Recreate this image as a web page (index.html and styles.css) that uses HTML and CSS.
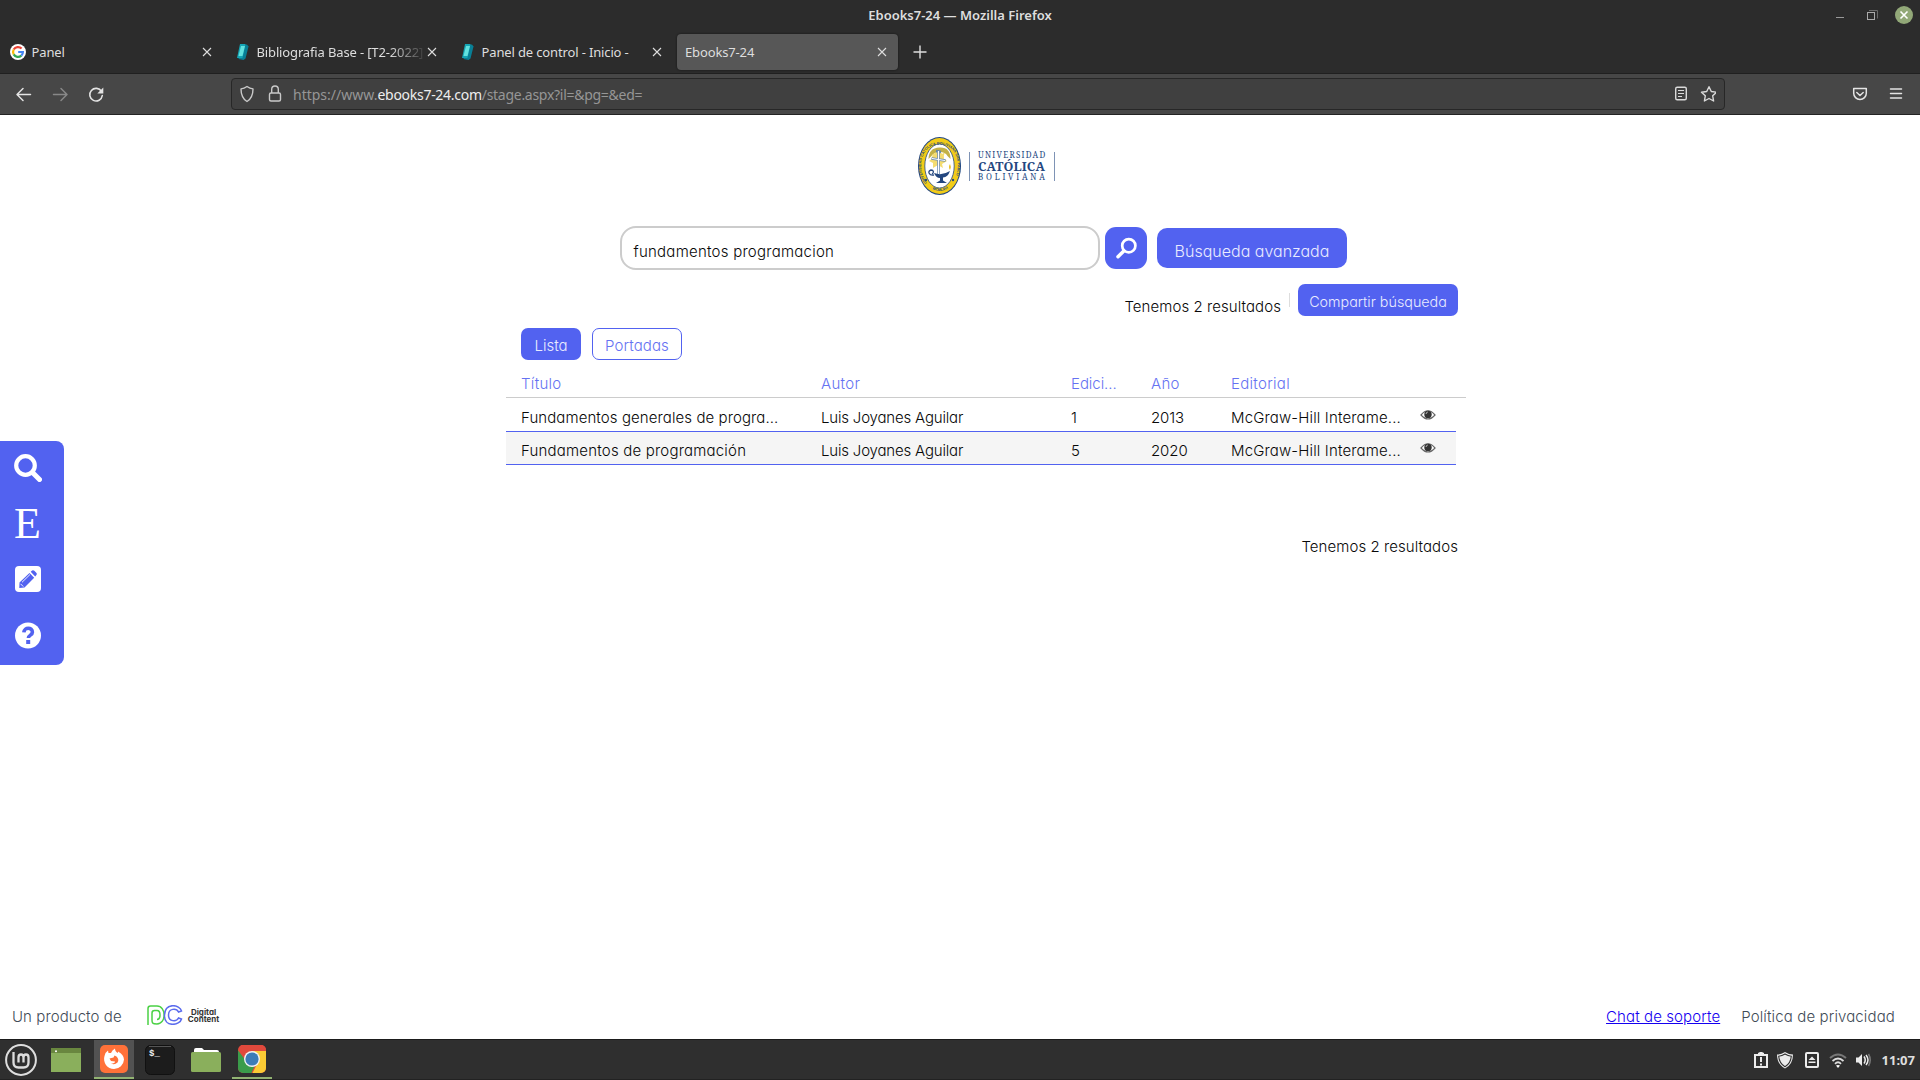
FILE: index.html
```html
<!DOCTYPE html>
<html lang="es">
<head>
<meta charset="utf-8">
<title>Ebooks7-24</title>
<link rel="stylesheet" href="styles.css">
</head>
<body>
<header class="titlebar">
  <span class="window-title">Ebooks7-24 — Mozilla Firefox</span>
  <svg class="window-controls" width="90" height="30" viewBox="0 0 90 30">
    <path d="M6 17.500h8" stroke="#999" fill="none"/>
    <path d="M39 10.500h8.500v8" stroke="#6a6a6a" fill="none"/>
    <rect x="37.500" y="12.500" width="7" height="7" stroke="#aaa" fill="none"/>
    <circle cx="74" cy="15" r="9" fill="#92a878"/>
    <path d="M70.500 11.500l7 7M77.500 11.500l-7 7" stroke="#fff" stroke-width="1.600"/>
  </svg>
</header>
<nav class="tabs">
  <div class="tab">
    <svg class="favicon" width="16" height="16" viewBox="0 0 16 16"><circle cx="8" cy="8" r="8" fill="#fff"/><g fill="none" stroke-width="2.200"><path d="M11.600 4.600A4.900 4.900 0 0 0 3.700 5.600" stroke="#ea4335"/><path d="M3.700 5.600a4.900 4.900 0 0 0 0 4.800" stroke="#fbbc05"/><path d="M3.700 10.400a4.900 4.900 0 0 0 7.600 1.200" stroke="#34a853"/><path d="M11.300 11.600A4.900 4.900 0 0 0 12.900 8H8.200" stroke="#4285f4"/></g></svg>
    <span class="tab-label">Panel</span>
    <svg class="close" width="10" height="10" viewBox="0 0 10 10"><path d="M1 1l8 8M9 1L1 9"/></svg>
  </div>
  <div class="tab">
    <svg class="favicon" width="16" height="16" viewBox="0 0 16 16"><path d="M7 1l5-.5 1.500 2-3 12-2 1.500-5-1z" fill="#087f96"/><path d="M5 0h5.500L7.500 14H2z" fill="#15a5b5"/><path d="M6 2h4L7.500 12h-4z" fill="#62e2df"/></svg>
    <span class="tab-label faded">Bibliografia Base - [T2-2022]</span>
    <svg class="close" width="10" height="10" viewBox="0 0 10 10"><path d="M1 1l8 8M9 1L1 9"/></svg>
  </div>
  <div class="tab">
    <svg class="favicon" width="16" height="16" viewBox="0 0 16 16"><path d="M7 1l5-.5 1.500 2-3 12-2 1.500-5-1z" fill="#087f96"/><path d="M5 0h5.500L7.500 14H2z" fill="#15a5b5"/><path d="M6 2h4L7.500 12h-4z" fill="#62e2df"/></svg>
    <span class="tab-label">Panel de control - Inicio -</span>
    <svg class="close" width="10" height="10" viewBox="0 0 10 10"><path d="M1 1l8 8M9 1L1 9"/></svg>
  </div>
  <div class="tab active">
    <span class="tab-label">Ebooks7-24</span>
    <svg class="close" width="10" height="10" viewBox="0 0 10 10"><path d="M1 1l8 8M9 1L1 9"/></svg>
  </div>
  <svg class="new-tab" width="14" height="14" viewBox="0 0 14 14"><path d="M7 .5v13M.5 7h13"/></svg>
</nav>
<div class="toolbar">
  <svg class="nav-buttons" width="110" height="20" viewBox="0 0 110 20">
    <g fill="none" stroke-width="1.500" stroke-linecap="round" stroke-linejoin="round">
      <path d="M30.500 10.500H17.500M23 4.500l-6 6 6 6" stroke="#e4e4e4"/>
      <path d="M53.500 10.500h13M61 4.500l6 6-6 6" stroke="#888"/>
      <path d="M101.500 7.500A6.300 6.300 0 1 0 102.300 11.500" stroke="#e4e4e4" stroke-width="1.600"/>
    </g>
    <path d="M103.300 3.500v6h-6z" fill="#e4e4e4"/>
  </svg>
  <div class="urlbar">
    <svg width="48" height="20" viewBox="0 0 48 20" fill="none" stroke="#c9c9c9" stroke-width="1.400" stroke-linejoin="round">
      <path d="M7 2.500c2 1.500 3.800 2.200 6 2.400 0 5.500-1.500 9.700-6 12.600C2.500 14.600 1 10.400 1 4.900 3.200 4.700 5 4 7 2.500z"/>
      <rect x="29.500" y="9" width="11" height="8" rx="1.500"/><path d="M31.700 9V5.300a3.300 3.300 0 0 1 6.600 0V9"/>
    </svg>
    <span class="url">https://www.<b>ebooks7-24.com</b><span class="path">/stage.aspx?il=&amp;pg=&amp;ed=</span></span>
    <svg width="46" height="20" viewBox="0 0 46 20" fill="none" stroke="#dadada" stroke-width="1.400" stroke-linejoin="round">
      <rect x="5.700" y="3.200" width="10.600" height="12.600" rx="1.500"/><path d="M8 6.500h6M8 9.500h6M8 12.500h4" stroke-width="1.200"/>
      <path d="M39 2.700l2.300 4.800 5.200.7-3.800 3.600.9 5.200-4.600-2.500-4.600 2.500.9-5.200-3.800-3.600 5.200-.7z"/>
    </svg>
  </div>
  <svg class="menu-buttons" width="64" height="20" viewBox="0 0 64 20" fill="none" stroke="#e4e4e4" stroke-width="1.500" stroke-linecap="round" stroke-linejoin="round">
    <path d="M9.700 4.500h12.600v4.700a6.300 6.300 0 0 1-12.600 0z"/><path d="M12.800 8.500L16 11.500l3.200-3"/>
    <path d="M46.500 5h11M46.500 9.500h11M46.500 14h11"/>
  </svg>
</div>
<main class="page">
  <aside class="side">
    <svg width="28" height="28" viewBox="0 0 28 28" fill="none" stroke="#fff"><circle cx="11.500" cy="11.500" r="9.300" stroke-width="4.200"/><path d="M18.500 18.500l7 7" stroke-width="5" stroke-linecap="round"/></svg>
    <span class="side-letter">E</span>
    <svg width="28" height="28" viewBox="0 0 28 28"><rect x="1" y="0" width="26" height="26" rx="4" fill="#fff"/><g transform="translate(0 -1)"><g fill="#5262f0"><path d="M5.500 17.500L15.500 8l4.700 4.700-9.700 9.800-5.200.4z"/><path d="M16.700 6.800l1.400-1.300q1.200-.8 2.200.2l2.200 2.400q.8 1-.1 2l-1.200 1.400z"/></g><path d="M8 17.300l8-7.800M6.500 18.800l2.800 2.800" stroke="#fff" stroke-width=".9"/></g></svg>
    <svg width="28" height="28" viewBox="0 0 28 28"><g transform="translate(0 -.5)"><circle cx="14" cy="14" r="13" fill="#fff"/><path d="M9.800 10.800c.3-5.400 8.700-5.200 8.600-.2 0 3.200-4 2.800-4 6" fill="none" stroke="#5262f0" stroke-width="3.600"/><rect x="12.200" y="18.500" width="4" height="4" fill="#5262f0"/></g></svg>
  </aside>
  <div class="logo">
    <svg width="43" height="58" viewBox="0 0 43 58">
      <defs><path id="ring" d="M9 46C-2 31 3 7.500 21.500 7.500S45 31 34 46"/><path id="base" d="M11 50q10.500 8 21 0"/></defs>
      <ellipse cx="21.500" cy="29" rx="21.500" ry="29" fill="#24477f"/>
      <ellipse cx="21.500" cy="29" rx="20.500" ry="28" fill="#f2cc18"/>
      <ellipse cx="21.500" cy="29" rx="14.700" ry="22" fill="#fff" stroke="#24477f" stroke-width=".8"/>
      <text class="seal-text"><textPath href="#ring" textLength="91">UNIVERSIDAD CATOLICA BOLIVIANA SAN PABLO</textPath></text>
      <text class="seal-text"><textPath href="#base" startOffset="4">MCMLXVI</textPath></text>
      <g fill="#f4dc70"><circle cx="20" cy="21" r="6"/><path d="M14 15l4 3 2-6 3 6 4-3-2 6 4 3-5 3 1 4-5-3-5 3 0-5-4-2 4-3z"/></g>
      <path d="M10.500 22q0-11 11-11.500t11 11.500l-3-3q-2-4-8-4t-8 4z" fill="#c3b146"/>
      <path d="M20.500 14v23M13.500 21.500l14 2M18 14l5 1" stroke="#6284ad" stroke-width="2.600"/><path d="M20.500 14v23M14 21.500l13 2" stroke="#fff" stroke-width="1.200"/>
      <path d="M16 36q8 3 16-2-2 6-7 6.500v3l4 2.500H18l4-2.500v-2.500q-4 0-6-5z" fill="#24477f"/>
      <path d="M16 38c-5 1-7-4-3-5 3 0 3 3 1 4" fill="none" stroke="#24477f" stroke-width="1.300"/>
      <path d="M32 33q-2-3 0-6 1.800 3 0 6z" fill="#e8bd20"/>
      <circle cx="8" cy="43" r="1.200" fill="#24477f"/><circle cx="35" cy="43" r="1.200" fill="#24477f"/>
    </svg>
    <div class="logo-name"><span class="line-top">UNIVERSIDAD</span><strong>CATÓLICA</strong><span class="line-bottom">BOLIVIANA</span></div>
  </div>
  <form class="search">
    <div class="search-field">fundamentos programacion</div>
    <div class="btn search-go"><svg width="24" height="24" viewBox="0 0 24 24" fill="none" stroke="#fff" stroke-linecap="round"><circle cx="14.800" cy="9.700" r="6.600" stroke-width="2.700"/><path d="M9.800 14.900L4 20.700" stroke-width="3.500"/></svg></div>
    <div class="btn advanced">Búsqueda avanzada</div>
  </form>
  <section class="results">
    <div class="summary"><span class="count">Tenemos 2 resultados</span><i class="divider"></i><div class="btn share">Compartir búsqueda</div></div>
    <div class="views"><div class="btn view">Lista</div><div class="btn view outline">Portadas</div></div>
    <div class="row head"><span>Título</span><span>Autor</span><span class="edition">Edici...</span><span>Año</span><span>Editorial</span></div>
    <div class="row item"><span class="book">Fundamentos generales de progra...</span><span class="author">Luis Joyanes Aguilar</span><span>1</span><span class="year">2013</span><span class="publisher">McGraw-Hill Interame...</span>
      <svg width="16" height="12" viewBox="0 0 16 12"><path d="M1 6q7-8.500 14 0-7 8-14 0z" fill="#fff" stroke="#666" stroke-width="1.200"/><circle cx="8" cy="5.500" r="3.700" fill="#333"/><path d="M6 5q.2-1.800 1.800-2" stroke="#bbb" fill="none"/></svg></div>
    <div class="row item alt"><span class="book short">Fundamentos de programación</span><span class="author">Luis Joyanes Aguilar</span><span>5</span><span class="year">2020</span><span class="publisher">McGraw-Hill Interame...</span>
      <svg width="16" height="12" viewBox="0 0 16 12"><path d="M1 6q7-8.500 14 0-7 8-14 0z" fill="#fff" stroke="#666" stroke-width="1.200"/><circle cx="8" cy="5.500" r="3.700" fill="#333"/><path d="M6 5q.2-1.800 1.800-2" stroke="#bbb" fill="none"/></svg></div>
    <div class="total"><span class="count">Tenemos 2 resultados</span></div>
  </section>
  <footer class="footer">
    <span class="product">Un producto de</span>
    <svg class="dc" width="36" height="20" viewBox="0 0 36 20" fill="none" stroke-width="1.500"><path d="M1 20V3.500Q1 1 3.500 1H10c9.500 0 9.500 18 0 18-5 0-5-1.500-5-4V8q0-2.500 2.500-2.500H10c4 0 4 9 0 9" stroke="#4bd145"/><path d="M34.500 6C33-.5 18-3 17.500 10S33 20.500 34.500 14l-3-1c-2 4-10 4-10-3s8-7 10-3z" stroke="#5b6bed"/></svg>
    <div class="dc-name"><span>Digital</span><span>Content</span></div>
    <a>Chat de soporte</a>
    <span class="policy">Política de privacidad</span>
  </footer>
</main>
<div class="taskbar">
  <div class="launcher"><svg width="34" height="34" viewBox="0 0 34 34" fill="none" stroke="#dedede"><circle cx="17" cy="17" r="14.900" stroke-width="2"/><path d="M9.500 9v10.500q0 5 5 5h5q5 0 5-5v-5q0-3-2.500-3t-2.500 3v5M19.500 14.500q0-3-2.500-3t-2.500 3v5" stroke-width="2.300"/></svg></div>
  <div class="launcher"><svg width="30" height="24" viewBox="0 0 30 24"><path fill="#8aaf5c" d="M0 0h30v24H0z"/><path fill="#69873f" d="M0 0h30v5H0z"/><circle cx="5" cy="3.300" r="1" fill="#fff"/></svg></div>
  <div class="launcher focused"><svg width="30" height="30" viewBox="0 0 30 30"><rect x="1" y="1" width="28" height="28" rx="5" fill="#ff7139"/><path d="M15 25A10 10 0 0 1 5.500 12Q6.500 8 9 6.500L9.500 9 12 9Q13 6 16 4.500q0 3 3 4.500V7.500Q25 11 25 15.500A10 10 0 0 1 15 25z" fill="#fff"/><path d="M10.500 14.500l4-1 1-2 2 1q3 3 1 6-3 3-6.500 1 4 0 4-2l-4-.5z" fill="#ff7139"/></svg></div>
  <div class="launcher"><svg width="30" height="30" viewBox="0 0 30 30"><rect x=".5" y=".5" width="29" height="29" rx="5" fill="#1c1c1c" stroke="#111"/><path d="M4 1.500h22" stroke="#555"/><text x="4" y="10.500" class="prompt">$_</text></svg></div>
  <div class="launcher"><svg width="30" height="24" viewBox="0 0 30 24"><path fill="#fff" d="M3 5V2q0-2 2-2h6l2 2h13q2 0 2 2v3H3z"/><rect y="4" width="30" height="20" rx="1.500" fill="#8aaf5c"/></svg></div>
  <div class="launcher running"><svg width="30" height="30" viewBox="0 0 30 30"><defs><clipPath id="tile"><rect x="1" y="1" width="28" height="28" rx="5"/></clipPath></defs><g clip-path="url(#tile)"><path fill="#e0493c" d="M0 0h30v30H0z"/><path fill="#fbcb34" d="M15 7h15v23H15l6-12z"/><path fill="#3a9c4a" d="M0 5l9 12 9 4-4 9H0z"/><path fill="#e0493c" d="M0 0h30v7H15z"/></g><circle cx="15" cy="15" r="8" fill="#f2f2f2"/><circle cx="15" cy="15" r="6.600" fill="#3c7cb8"/></svg></div>
  <div class="tray">
    <svg width="118" height="20" viewBox="0 0 118 20">
      <g fill="none" stroke="#ececec" stroke-width="2"><path d="M1 5h12v12H1z"/><path d="M7 7v5M7 13.500v2"/></g><path d="M4 4V3l2-1h2l2 1v1z" fill="#ececec"/>
      <path d="M31 2q4 2.500 8 2.500 0 10-8 14-8-4-8-14 4 0 8-2.500z" fill="#ececec"/><path d="M31 4q3 2 6.300 2.200-.5 7-6.300 10.500-5.800-3.500-6.300-10.500Q28 6 31 4z" stroke="#2f2f2f" fill="#ececec" stroke-width="1.100"/>
      <rect x="52" y="3" width="12" height="14" rx="1" fill="none" stroke="#ececec" stroke-width="2"/><path d="M54.500 10L58 6.500l3.500 3.500zM54.500 11.500h7V13h-7z" fill="#ececec"/>
      <g fill="none"><path d="M76 8q8-7 16 0" stroke="#777" stroke-width="2"/><path d="M78.500 11q5.500-5 11 0M81 13.800q3-3 6 0" stroke="#ddd" stroke-width="1.800"/></g><path d="M82 15.500q2-1 4 0l-2 2.500z" fill="#fff"/>
      <path d="M102 7.500h2.500L108 4v12l-3.500-3.500H102z" fill="#ececec"/><path d="M110 6.500q2.500 3.500 0 7M112 5q4 5 0 10" fill="none" stroke="#ececec" stroke-width="1.500"/><path d="M114.500 4q3.500 6 0 12" fill="none" stroke="#777" stroke-width="1.500"/>
    </svg>
    <b class="clock">11:07</b>
  </div>
</div>
</body>
</html>
```
FILE: styles.css
```css
* { box-sizing: border-box; }
body { margin: 0; width: 1920px; height: 1080px; overflow: hidden; display: flex; flex-direction: column; background: #fff; font-family: Inter, "Liberation Sans", sans-serif; font-feature-settings: "cv11"; font-size: 15px; font-weight: 350; color: #080808; }
svg { flex: none; display: block; }
span, b, a, strong { white-space: nowrap; }

/* browser chrome */
.titlebar, .tabs, .toolbar, .taskbar { font-family: "Noto Sans", sans-serif; font-weight: 400; color: #dedede; }
.titlebar { height: 30px; display: grid; grid-template-columns: 90px 1fr 90px; background: #2c2c2c; }
.window-title { grid-column: 2; text-align: center; font-size: 13px; font-weight: 600; line-height: 31px; }
.tabs { height: 43px; background: #2c2c2c; display: flex; align-items: center; padding: 1px 0 0 1px; }
.tab { width: 221px; height: 36px; margin-right: 4px; padding: 0 10px 0 9px; display: flex; align-items: center; border-radius: 4px; }
.tab.active { width: 221px; margin-left: 1px; padding: 0 11px 0 8px; background: #575757; box-shadow: 0 0 2px #111; }
.favicon { margin-right: 5.5px; }
.tab-label { flex: 1; overflow: hidden; font-size: 13px; line-height: 20px; letter-spacing: -.14px; }
.faded { -webkit-mask-image: linear-gradient(90deg, #000 78%, transparent 100%); mask-image: linear-gradient(90deg, #000 78%, transparent 100%); }
.close, .new-tab { fill: none; stroke: #dedede; stroke-width: 1.1; }
.new-tab { margin-left: 11px; stroke-width: 1.4; }
.toolbar { height: 42px; display: flex; align-items: center; background: #474747; border-top: 1px solid #202020; border-bottom: 1px solid #232323; }
.nav-buttons { margin: 0 121px 0 0; }
.urlbar { width: 1494px; height: 32px; margin-right: 119px; padding: 0 8px; display: flex; align-items: center; background: #404040; border: 1px solid #272727; border-radius: 4px; }
.url { flex: 1; margin-left: 5px; font-size: 14px; color: #969696; }
.url b { color: #eee; font-weight: 400; letter-spacing: -.28px; }
.url .path { letter-spacing: -.28px; }

/* page */
.page { position: relative; flex: 1; display: flex; flex-direction: column; align-items: flex-start; }
.side { position: absolute; left: 0; top: 326px; width: 64px; height: 224px; padding: 13px 0 0 14px; display: flex; flex-direction: column; gap: 28px; background: #5262f0; border-radius: 0 8px 8px 0; }
.side-letter { height: 28px; font: 44px/28px "Liberation Serif", serif; color: #fff; }
.logo { display: flex; align-items: center; margin: 22px 0 0 917.5px; }
.logo-name { width: 86px; height: 29px; margin-left: 8.5px; padding: 0 0 0 8px; border: solid #7e93b5; border-width: 0 1px; display: flex; flex-direction: column; color: #24477f; font-family: "Noto Serif", "Liberation Serif", serif; font-weight: 400; font-size: 8px; }
.logo-name > * { align-self: flex-start; }
.line-top { line-height: 9px; margin-top: -2px; letter-spacing: 1.25px; }
.logo-name strong { font-size: 12.5px; line-height: 13px; margin-top: 1px; letter-spacing: .15px; }
.line-bottom { line-height: 8px; margin-top: .5px; letter-spacing: 2.75px; }
.seal-text { font: bold 3.6px "Liberation Sans", sans-serif; fill: #24477f; }
.search { display: flex; align-items: center; margin: 31px 0 0 620px; }
.search-field { width: 480px; height: 44px; padding: 3px 0 0 11.5px; border: 2px solid #ccc; border-radius: 16px; line-height: 41px; letter-spacing: .25px; }
.btn { display: flex; justify-content: center; align-items: center; background: #5262f0; color: #e9ebff; border-radius: 7px; font-weight: 300; white-space: nowrap; }
.search-go { width: 42px; height: 42px; margin: 0 10px 0 5px; border-radius: 11px; }
.advanced { width: 190px; height: 40px; padding-top: 6px; border-radius: 10px; font-size: 16px; }
.results { width: 960px; margin: 14px 0 0 506px; }
.summary { display: flex; justify-content: flex-end; padding-right: 8px; height: 32px; line-height: 45px; }
.count { letter-spacing: .07px; }
.divider { width: 1px; height: 14px; margin: 9px 8px 0 8px; background: #ddd; }
.share { width: 160px; height: 32px; padding-top: 3px; line-height: 20px; font-size: 14.3px; }
.views { display: flex; gap: 11px; padding: 12px 0 0 15px; }
.view { width: 60px; height: 32px; padding-top: 3.5px; }
.view.outline { width: 90px; background: #fff; border: 1px solid #5262f0; color: #6572f2; letter-spacing: .1px; }
.row { display: grid; grid-template-columns: 300px 250px 80px 80px 189px 16px; padding-left: 15px; }
.head { height: 38px; padding-top: 14px; line-height: 20px; color: #6572f2; border-bottom: 1px solid #ccc; font-weight: 300; letter-spacing: .3px; }
.edition { letter-spacing: -.05px; }
.item { width: 950px; height: 33px; padding-top: 9px; line-height: 20px; border-bottom: 1px solid #5262f0; }
.item:nth-of-type(4) { height: 34px; padding-top: 10px; }
.item svg { margin-top: 1px; }
.book { letter-spacing: .09px; }
.book.short { letter-spacing: .2px; }
.author { letter-spacing: -.18px; }
.year { letter-spacing: -.1px; }
.publisher { letter-spacing: .15px; }
.alt { background: #f5f5f5; }
.total { display: flex; justify-content: flex-end; padding: 72px 8px 0 0; line-height: 20px; }
.footer { width: 1920px; margin-top: auto; height: 46px; display: flex; align-items: flex-start; padding: 14px 0 0 12px; color: #414b56; line-height: 20px; }
.dc { margin: -2px 5px 0 25px; }
.product { width: 110px; letter-spacing: .08px; }
.dc-name { width: 33px; margin: 2px auto 0 -1px; display: flex; flex-direction: column; align-items: center; color: #333; font-size: 8px; line-height: 6.5px; font-weight: 700; }
.footer a { color: #1400f0; text-decoration: underline; letter-spacing: .1px; margin-right: 21px; }
.footer .policy { margin-right: 25px; letter-spacing: .13px; }

/* desktop panel */
.taskbar { height: 41px; display: flex; background: #2f2f2f; border-top: 1px solid #1b1b1b; border-bottom: 1px solid #222; padding-left: 1px; }
.launcher { width: 40px; display: flex; justify-content: center; align-items: center; margin-right: 5px; }
.launcher:nth-child(3) { margin-left: 3px; margin-right: 6px; }
.launcher:nth-child(4) { margin-right: 6px; }
.launcher:nth-child(5) { margin-right: 6px; }
.launcher.focused, .launcher.running { border-bottom: 2px solid #92b372; }
.focused { background: #525252; }
.prompt { font: bold 9px "Liberation Mono", monospace; fill: #eee; }
.tray { margin-left: auto; display: flex; align-items: center; gap: 10px; padding-right: 5px; }
.clock { font-size: 13px; }
```
